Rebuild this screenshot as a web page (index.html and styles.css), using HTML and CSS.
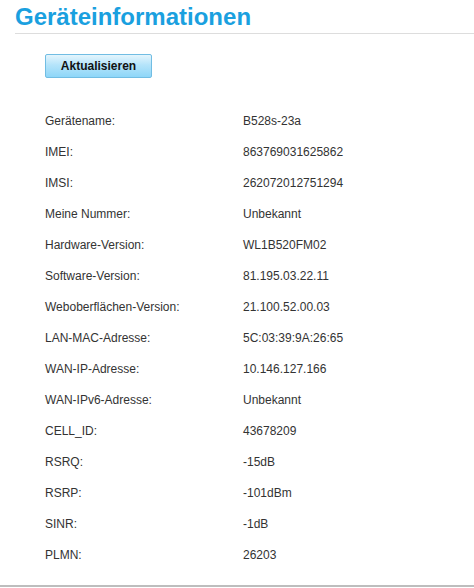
FILE: index.html
```html
<!DOCTYPE html>
<html lang="de">
<head>
<meta charset="utf-8">
<title>Geräteinformationen</title>
<link rel="stylesheet" href="styles.css">
</head>
<body>
<div class="page">
  <div class="content">
    <h1 class="title">Geräteinformationen</h1>
    <div class="actions">
      <button class="btn" type="button">Aktualisieren</button>
    </div>
    <dl class="info">
      <dt>Gerätename:</dt><dd>B528s-23a</dd>
      <dt>IMEI:</dt><dd>863769031625862</dd>
      <dt>IMSI:</dt><dd>262072012751294</dd>
      <dt>Meine Nummer:</dt><dd>Unbekannt</dd>
      <dt>Hardware-Version:</dt><dd>WL1B520FM02</dd>
      <dt>Software-Version:</dt><dd>81.195.03.22.11</dd>
      <dt>Weboberflächen-Version:</dt><dd>21.100.52.00.03</dd>
      <dt>LAN-MAC-Adresse:</dt><dd>5C:03:39:9A:26:65</dd>
      <dt>WAN-IP-Adresse:</dt><dd>10.146.127.166</dd>
      <dt>WAN-IPv6-Adresse:</dt><dd>Unbekannt</dd>
      <dt>CELL_ID:</dt><dd>43678209</dd>
      <dt>RSRQ:</dt><dd>-15dB</dd>
      <dt>RSRP:</dt><dd>-101dBm</dd>
      <dt>SINR:</dt><dd>-1dB</dd>
      <dt>PLMN:</dt><dd>26203</dd>
    </dl>
  </div>
  <div class="footer-line"></div>
</div>
</body>
</html>
```

FILE: styles.css
```css
html, body {
  margin: 0;
  padding: 0;
  background: #fff;
}

body {
  font-family: "Liberation Sans", Arial, sans-serif;
  font-size: 12px;
  color: #333;
}

.page {
  width: 474px;
}

.content {
  padding-left: 15px;
}

.title {
  margin: 0;
  padding: 4px 0 3px 0;
  font-size: 24px;
  line-height: 26px;
  font-weight: bold;
  color: #1aa0df;
  border-bottom: 1px solid #dddddd;
}

.actions {
  padding: 20px 0 0 30px;
  display: flex;
}

.btn {
  box-sizing: border-box;
  width: 107px;
  height: 24px;
  padding: 0;
  margin: 0;
  font-family: "Liberation Sans", Arial, sans-serif;
  font-size: 12px;
  font-weight: bold;
  color: #111;
  border: 1px solid #71bde3;
  border-radius: 2px;
  background: linear-gradient(to bottom, #e4f5fd 0%, #b5e4fa 45%, #8ed6f8 100%);
  cursor: pointer;
}

.info {
  margin: 28px 0 0 30px;
  display: grid;
  grid-template-columns: 198px 1fr;
  line-height: 31px;
}

.info dt,
.info dd {
  margin: 0;
  color: #333;
}

.footer-line {
  margin-top: 14px;
  height: 2px;
  background: #bdbdbd;
}
```
